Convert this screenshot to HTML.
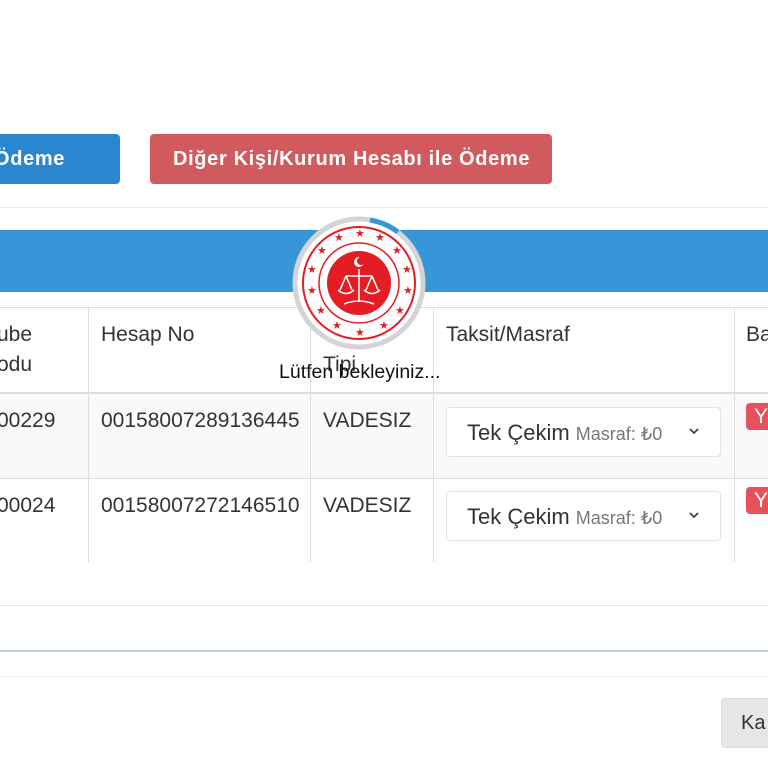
<!DOCTYPE html>
<html><head><meta charset="utf-8"><style>
body{margin:0;width:768px;height:768px;overflow:hidden;background:#fff;font-family:"Liberation Sans",Arial,sans-serif;position:relative;color:#333}
.abs{position:absolute}
.btn{position:absolute;border-radius:4px;color:#fff;font-size:20px;font-weight:bold;letter-spacing:0.65px;line-height:51px;box-sizing:border-box;white-space:nowrap}
.vl{position:absolute;width:1px;background:#ddd}
.hl{position:absolute;height:1px;left:0;width:768px;background:#ddd}
.t{position:absolute;font-size:21px;color:#333;white-space:nowrap}
.sel{position:absolute;left:446px;width:275px;height:50px;border:1px solid #e4e4e4;border-radius:4px;background:#fff;box-sizing:border-box}
.sel .a{position:absolute;left:20px;top:12px;font-size:22px;color:#333;white-space:nowrap}
.sel .b{font-size:18px;color:#777}
.sel .c{position:absolute;left:240px;top:16px}
.badge{position:absolute;left:746px;width:30px;height:27px;background:#e8505b;border-radius:4px;color:#fff;font-size:21px;line-height:27px;padding-left:8px;box-sizing:border-box}
</style></head><body>
<div class="btn" style="left:-20px;top:134px;width:140px;height:50px;background:#2a87cf;padding-left:14px">Ödeme</div>
<div class="btn" style="left:150px;top:134px;width:402px;height:50px;background:#d05a5e;padding-left:23px">Diğer Kişi/Kurum Hesabı ile Ödeme</div>
<div class="hl" style="top:207px;background:#eee"></div>
<div class="abs" style="left:0;top:230px;width:768px;height:62px;background:#3795d8"></div>
<div class="hl" style="top:307px"></div>
<div class="abs" style="left:0;top:393px;width:768px;height:85px;background:#f9f9f9"></div>
<div class="hl" style="top:392px;height:2px;background:#ddd"></div>
<div class="hl" style="top:478px"></div>
<div class="vl" style="left:88px;top:307px;height:255px"></div>
<div class="vl" style="left:310px;top:307px;height:255px"></div>
<div class="vl" style="left:433px;top:307px;height:255px"></div>
<div class="vl" style="left:734px;top:307px;height:255px"></div>
<div class="t" style="left:-3px;top:320px;line-height:30px">ube<br>odu</div>
<div class="t" style="left:101px;top:323px">Hesap No</div>
<div class="t" style="left:323px;top:353px">Tipi</div>
<div class="t" style="left:446px;top:323px">Taksit/Masraf</div>
<div class="t" style="left:746px;top:323px">Ba</div>
<div class="t" style="left:-3px;top:409px">00229</div>
<div class="t" style="left:101px;top:409px">00158007289136445</div>
<div class="t" style="left:323px;top:409px">VADESIZ</div>
<div class="t" style="left:-3px;top:494px">00024</div>
<div class="t" style="left:101px;top:494px">00158007272146510</div>
<div class="t" style="left:323px;top:494px">VADESIZ</div>
<div class="sel" style="top:407px"><span class="a">Tek Çekim <span class="b">Masraf: ₺0</span></span><svg class="c" width="14" height="14" viewBox="0 0 14 14"><path d="M3 5 L7 9 L11 5" stroke="#444" stroke-width="1.8" fill="none"/></svg></div>
<div class="sel" style="top:491px"><span class="a">Tek Çekim <span class="b">Masraf: ₺0</span></span><svg class="c" width="14" height="14" viewBox="0 0 14 14"><path d="M3 5 L7 9 L11 5" stroke="#444" stroke-width="1.8" fill="none"/></svg></div>
<div class="badge" style="top:403px">Y</div>
<div class="badge" style="top:487px">Y</div>
<div class="hl" style="top:605px;background:#e6e6e6"></div>
<div class="hl" style="top:650px;height:2px;background:#b9cfe4"></div>
<div class="hl" style="top:676px;background:#eee"></div>
<div class="abs" style="left:721px;top:698px;width:60px;height:50px;background:#e6e6e6;border-radius:4px;border:1px solid #ddd;box-sizing:border-box;font-size:20px;line-height:48px;padding-left:19px">Ka</div>
<svg class="abs" style="left:290px;top:214px" width="140" height="140" viewBox="0 0 140 140">
<circle cx="69" cy="69" r="64" fill="#fff" stroke="#d4d4d4" stroke-width="5"/>
<path d="M80 6 A64 64 0 0 1 108 18" fill="none" stroke="#3795d8" stroke-width="5"/>
<circle cx="69" cy="69" r="56" fill="#fff" stroke="#e21d24" stroke-width="2"/>
<circle cx="69" cy="69" r="40" fill="#fff" stroke="#e21d24" stroke-width="1.5"/>
<circle cx="69" cy="69" r="32" fill="#e21d24"/>
<g fill="#e21d24" font-size="11">
<text x="65" y="23">★</text><text x="85" y="27">★</text><text x="102" y="40">★</text><text x="112" y="59">★</text><text x="113" y="80">★</text><text x="105" y="100">★</text><text x="89" y="115">★</text><text x="65" y="122">★</text><text x="42" y="115">★</text><text x="26" y="100">★</text><text x="17" y="80">★</text><text x="17" y="59">★</text><text x="27" y="40">★</text><text x="44" y="27">★</text>
</g>
<path d="M56 62 L82 62 M69 55 L69 88 M56 62 L50 76 M56 62 L62 76 M82 62 L76 76 M82 62 L88 76 M48 76 Q56 83 64 76 M74 76 Q82 83 90 76 M54 90 Q69 84 84 90" stroke="#fff" stroke-width="1.5" fill="none"/>
<circle cx="69" cy="48" r="5" fill="#fff"/><circle cx="71" cy="47" r="4" fill="#e21d24"/>
</svg>
<div class="abs" style="left:279px;top:361px;font-size:19.5px;color:#111;white-space:nowrap">Lütfen bekleyiniz...</div>
</body></html>
